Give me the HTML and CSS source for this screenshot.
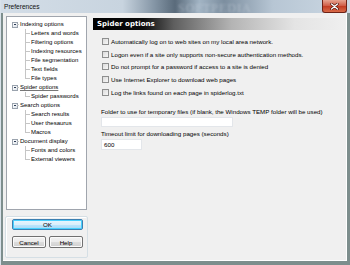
FILE: index.html
```html
<!DOCTYPE html>
<html lang="en">
<head>
    <meta charset="UTF-8">
    <title>Preferences</title>
    <link rel="stylesheet" href="styles.css">
</head>
<body>
<div class="window">

    <!-- Title bar -->
    <div class="titlebar">
        <span class="title">Preferences</span>
        <span class="watermark">SOFTPEDIA</span>
        <span class="close">
            <svg width="9" height="7" viewBox="0 0 9 7">
                <path d="M1.5 1 L7.5 6 M7.5 1 L1.5 6" stroke="#4a1008" stroke-width="2.6" stroke-linecap="round"/>
                <path d="M1.5 1 L7.5 6 M7.5 1 L1.5 6" stroke="#fff" stroke-width="1.4" stroke-linecap="round"/>
            </svg>
        </span>
    </div>

    <div class="client">

        <!-- Left side: tree + buttons -->
        <div class="sidebar">
            <ul class="tree">
                <li class="root">
                    <div class="node"><span class="toggle"></span><span class="label">Indexing options</span></div>
                    <ul class="children">
                        <li>Letters and words</li>
                        <li>Filtering options</li>
                        <li>Indexing resources</li>
                        <li>File segmentation</li>
                        <li>Text fields</li>
                        <li class="last">File types</li>
                    </ul>
                </li>
                <li class="root">
                    <div class="node"><span class="toggle"></span><span class="label selected">Spider options</span></div>
                    <ul class="children">
                        <li class="last">Spider passwords</li>
                    </ul>
                </li>
                <li class="root">
                    <div class="node"><span class="toggle"></span><span class="label">Search options</span></div>
                    <ul class="children">
                        <li>Search results</li>
                        <li>User thesaurus</li>
                        <li class="last">Macros</li>
                    </ul>
                </li>
                <li class="root">
                    <div class="node"><span class="toggle"></span><span class="label">Document display</span></div>
                    <ul class="children">
                        <li>Fonts and colors</li>
                        <li class="last">External viewers</li>
                    </ul>
                </li>
            </ul>

            <div class="btnbox">
                <button class="btn default">OK</button>
                <div class="btnrow">
                    <button class="btn">Cancel</button>
                    <button class="btn">Help</button>
                </div>
            </div>
        </div>

        <!-- Right side: page -->
        <div class="main">
            <div class="header">Spider options</div>

            <div class="checks">
                <label class="check"><span class="box"></span>Automatically log on to web sites on my local area network.</label>
                <label class="check"><span class="box"></span>Logon even if a site only supports non-secure authentication methods.</label>
                <label class="check"><span class="box"></span>Do not prompt for a password if access to a site is denied</label>
                <label class="check"><span class="box"></span>Use Internet Explorer to download web pages</label>
                <label class="check"><span class="box"></span>Log the links found on each page in spiderlog.txt</label>
            </div>

            <div class="field folder">
                <div class="caption">Folder to use for temporary files (if blank, the Windows TEMP folder will be used)</div>
                <div class="input wide"></div>
            </div>
            <div class="field">
                <div class="caption">Timeout limit for downloading pages (seconds)</div>
                <div class="input short">600</div>
            </div>
        </div>
    </div>
</div>
</body>
</html>
```

FILE: styles.css
```css
/* Page */
body {
    margin: 0;
    font-family: "Liberation Sans", Arial, sans-serif;
    font-size: 6.2px;
    color: #000;
}

.window {
    width: 350px;
    height: 265px;
    box-sizing: border-box;
    padding: 0 3px 4px 2px;
    background: #7d8e8d;
    border-left: 1px solid #d9e2ea;
    display: flex;
    flex-direction: column;
    overflow: hidden;
}

/* Title bar */
.titlebar {
    height: 13px;
    margin: 0 -3px 0 -3px;
    display: flex;
    align-items: center;
    position: relative;
    background: linear-gradient(to right, #d3dde7 0%, #c8d4df 35%, #8596a6 44%, #5a6b7b 50%, #a2b4c4 57%, #7c8e9f 64%, #b7c6d4 78%, #ccd8e3 100%);
}

.title {
    padding-left: 4px;
    font-size: 6.6px;
    color: #111;
}

.watermark {
    position: absolute;
    left: 178px;
    top: 1px;
    font-family: "Liberation Serif", serif;
    font-size: 12px;
    letter-spacing: 1px;
    color: rgba(225, 232, 240, 0.35);
    filter: blur(0.8px);
}

.close {
    position: absolute;
    right: 3px;
    top: 0;
    width: 25px;
    height: 13px;
    box-sizing: border-box;
    border: 1px solid #6e2216;
    border-top: none;
    border-radius: 0 0 3px 3px;
    background: linear-gradient(#e7a491, #cf5a43 50%, #c23b22 51%, #d86a48);
    display: flex;
    align-items: center;
    justify-content: center;
}

/* Client area */
.client {
    flex: 1;
    display: flex;
    gap: 5px;
    padding: 3px 1px 0 2px;
    background: #f0f0f0;
    border-right: 1px solid #fff;
    border-bottom: 1px solid #fff;
}

.sidebar {
    width: 83px;
    display: flex;
    flex-direction: column;
}

/* Tree */
.tree {
    list-style: none;
    margin: 0 1px;
    padding: 3px 0 0 0;
    height: 194px;
    box-sizing: border-box;
    background: #fff;
    border: 1px solid #a0a5ad;
    font-size: 6px;
}

.tree ul {
    list-style: none;
    margin: 0;
    padding: 0;
}

.node {
    height: 9px;
    line-height: 9px;
    display: flex;
    align-items: center;
}

.toggle {
    width: 6px;
    height: 6px;
    box-sizing: border-box;
    margin-left: 5px;
    border: 1px solid #9aa3ae;
    background: linear-gradient(135deg, #fff, #dde3ea);
    position: relative;
}

.toggle::after {
    content: "";
    position: absolute;
    left: 1px;
    top: 1.5px;
    width: 2px;
    height: 1px;
    background: #2b3b55;
}

.label {
    padding-left: 2px;
    position: relative;
}

.node .label::before {
    content: "";
    position: absolute;
    left: -1px;
    top: 4px;
    width: 2px;
    border-top: 1px solid #c5c5c5;
}

.label.selected {
    text-decoration: underline;
    text-decoration-color: #777;
}

.children li {
    position: relative;
    height: 9px;
    line-height: 9px;
    padding-left: 24px;
}

.children li::before {
    content: "";
    position: absolute;
    left: 18px;
    top: 0;
    width: 4px;
    height: 4px;
    border-left: 1px solid #c5c5c5;
    border-bottom: 1px solid #c5c5c5;
}

.children li::after {
    content: "";
    position: absolute;
    left: 18px;
    top: 5px;
    bottom: 0;
    border-left: 1px solid #c5c5c5;
}

.children li.last::after {
    display: none;
}

/* Buttons */
.btnbox {
    margin-top: 6px;
    height: 42px;
    box-sizing: border-box;
    border: 1px solid #d5dfe5;
    border-radius: 2px;
    box-shadow: inset 1px 1px 0 #fff;
    padding: 2px 4px 0 6px;
    display: flex;
    flex-direction: column;
    gap: 6px;
}

.btn {
    height: 11px;
    padding: 0;
    font-family: inherit;
    font-size: 6.2px;
    color: #000;
    border: 1px solid #707070;
    border-radius: 2px;
    background: linear-gradient(#f2f2f2 0%, #ebebeb 50%, #dddddd 51%, #cfcfcf 100%);
    box-shadow: inset 0 0 0 1px #fbfbfb;
}

.btn.default {
    width: 71px;
    border-color: #3c7fb1;
    background: linear-gradient(#eaf6fd 0%, #d9f0fc 50%, #bee6fd 51%, #a7d9f5 100%);
    box-shadow: inset 0 0 0 1px #48d1ff;
}

.btnrow {
    display: flex;
    gap: 3px;
}

.btnrow .btn {
    width: 34px;
    height: 12px;
}

/* Main page */
.main {
    flex: 1;
    display: flex;
    flex-direction: column;
    padding-top: 2px;
}

.header {
    height: 12px;
    line-height: 12px;
    padding-left: 4px;
    font-family: "DejaVu Sans", sans-serif;
    font-weight: bold;
    font-size: 7px;
    color: #fff;
    background: linear-gradient(to right, #000 0%, #0c0c0c 20%, #5e5e5e 32%, #b4b4b4 55%, #e4e4e4 80%, #efefef 100%);
}

.checks {
    margin-top: 5px;
    padding-left: 9px;
    display: flex;
    flex-direction: column;
}

.check {
    height: 12.75px;
    display: flex;
    align-items: center;
}

.box {
    width: 7px;
    height: 7px;
    box-sizing: border-box;
    margin-right: 2px;
    border: 1px solid #8e8f8f;
    background: linear-gradient(135deg, #dcdcdc, #f7f7f7);
}

.field {
    padding-left: 8px;
}

.field.folder {
    margin-top: 8px;
}

.caption {
    height: 9px;
    line-height: 9px;
}

.input {
    height: 10px;
    box-sizing: border-box;
    margin: 1px 0 2px;
    background: #fff;
    border: 1px solid #e3e6ea;
    padding-left: 2px;
    line-height: 9px;
}

.input.wide {
    width: 132px;
}

.input.short {
    width: 41px;
    height: 11px;
}
```
